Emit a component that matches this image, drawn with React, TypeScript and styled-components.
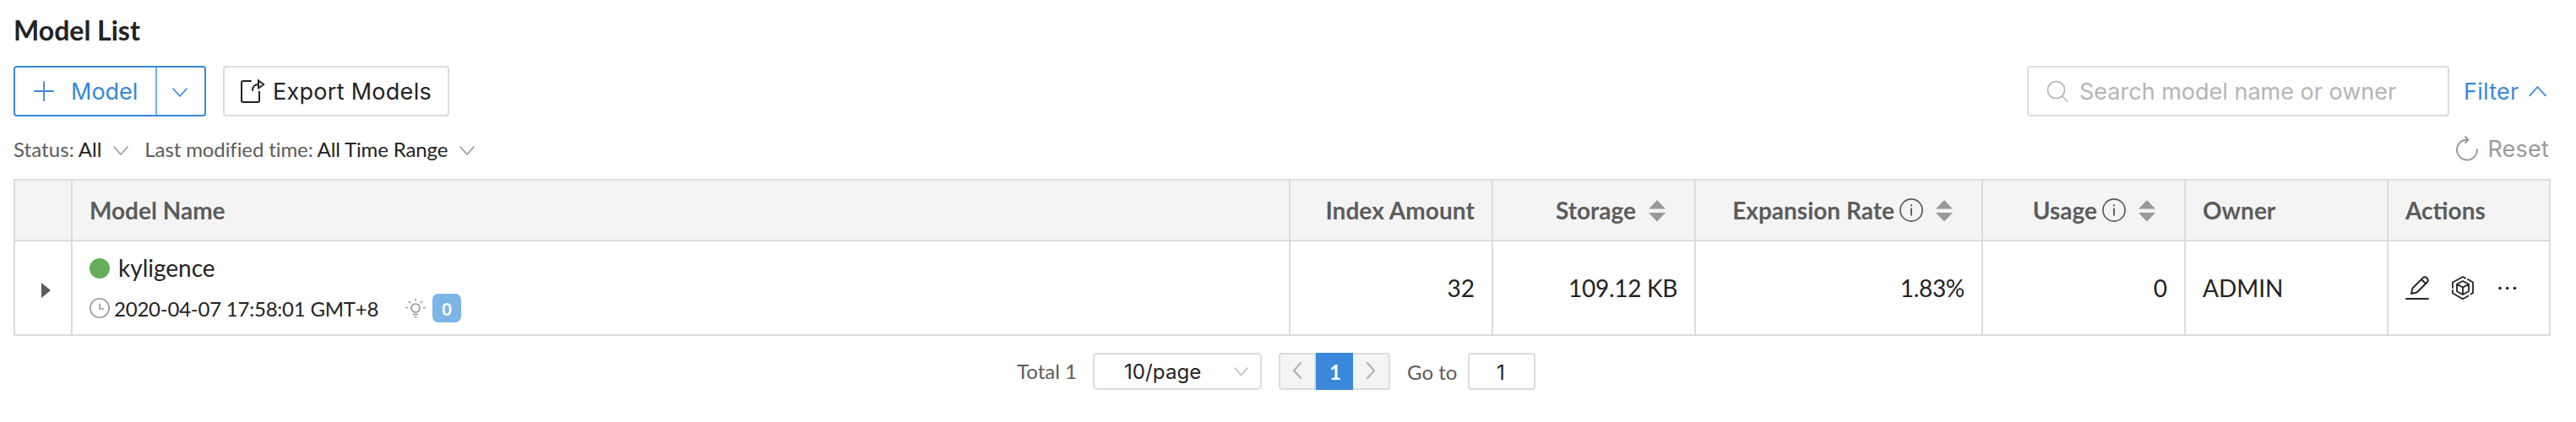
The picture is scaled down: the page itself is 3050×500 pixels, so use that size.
import React from "react";
import styled, { createGlobalStyle } from "styled-components";

const Global = createGlobalStyle`
  *{box-sizing:border-box}
  body{margin:0;background:#fff;color:#232323;font-family:Lato,"Liberation Sans",sans-serif}
  button,input{font:inherit;color:inherit;margin:0}
  svg{display:block;flex:none}
`;

const LINE = "#dcdcdc";
const BLUE = "#3988d9";
const UI = `Inter,"Liberation Sans",sans-serif`;

const Page = styled.main`width:3050px;height:500px;padding:16px 30px 0 16px;overflow:hidden;`;
const Title = styled.h1`margin:0;font-size:32px;line-height:40px;font-weight:700;height:62px;`;
const Toolbar = styled.div`display:flex;align-items:center;height:60px;`;
const Spacer = styled.div`flex:1;`;
const SplitButton = styled.div`
  display:flex;width:228px;height:60px;border:2px solid ${BLUE};border-radius:4px;color:${BLUE};
`;
const SplitMain = styled.button`
  display:flex;align-items:center;width:168px;padding:0 0 0 22px;gap:20px;border:0;border-right:2px solid #6fb0e6;
  background:none;font-family:${UI};font-size:27px;
`;
const SplitToggle = styled.button`flex:1;display:flex;align-items:center;justify-content:center;border:0;padding:3px 2px 0 0;background:none;`;
const ExportButton = styled.button`
  display:flex;align-items:center;width:268px;height:60px;margin-left:20px;padding:0 0 0 18px;gap:9px;
  border:2px solid ${LINE};border-radius:4px;background:#fff;font-family:${UI};font-size:27px;white-space:nowrap;
`;
const Label = styled.span<{ $ls?: number }>`white-space:nowrap;letter-spacing:${p => p.$ls ?? 0}px;`;
const Search = styled.div`
  display:flex;align-items:center;width:500px;height:60px;padding-left:21px;gap:13px;border:2px solid ${LINE};
  border-radius:4px;color:#b5b5b5;font-family:${UI};font-size:27px;
`;
const FilterLink = styled.a`
  display:flex;align-items:center;gap:12px;margin-left:17px;width:103px;color:${BLUE};font-family:${UI};font-size:27px;
`;
const Filters = styled.div`display:flex;align-items:center;height:74px;padding-top:3px;font-size:24px;color:#5c5c5c;white-space:nowrap;`;
const Value = styled.span<{ $ls?: number }>`color:#232323;margin-left:5px;letter-spacing:${p => p.$ls ?? 0}px;`;
const Drop = styled.span<{ $l: number; $r: number }>`margin:0 ${p => p.$r}px 0 ${p => p.$l}px;padding-top:3px;color:#999;`;
const Reset = styled.div`display:flex;align-items:center;gap:11px;margin:-1px 2px 0 0;color:#999;font-family:${UI};font-size:27px;`;

const Table = styled.div`width:3004px;border:2px solid ${LINE};border-right-width:0;`;
const Row = styled.div<{ $head?: boolean }>`
  display:grid;grid-template-columns:68px 1442px 240px 240px 340px 240px 240px 192px;
  height:${p => (p.$head ? 72 : 110)}px;
  background:${p => (p.$head ? "#f4f4f4" : "#fff")};
  border-bottom:${p => (p.$head ? `2px solid ${LINE}` : "0")};
  font-size:28px;font-weight:${p => (p.$head ? 700 : 400)};color:${p => (p.$head ? "#5c5c5c" : "#232323")};
`;
const Cell = styled.div<{ $right?: boolean; $ls?: number }>`
  display:flex;align-items:center;padding:0 20px;border-right:2px solid ${LINE};white-space:nowrap;
  justify-content:${p => (p.$right ? "flex-end" : "flex-start")};letter-spacing:${p => p.$ls ?? 0}px;
`;
const ExpandCell = styled(Cell)`padding:5px 0 0 31px;`;
const NameCell = styled(Cell)`flex-direction:column;align-items:flex-start;justify-content:flex-start;padding:12px 20px 0;`;
const NameLine = styled.div`display:flex;align-items:center;height:40px;gap:10px;`;
const Name = styled.span`padding-bottom:2px;`;
const MetaLine = styled.div`display:flex;align-items:center;height:34px;margin-top:10px;font-size:24px;`;
const Modified = styled.span`margin:0 32px 0 5px;letter-spacing:-0.23px;`;
const Dot = styled.i`width:24px;height:24px;border-radius:50%;background:#67ac5b;`;
const Badge = styled.span`
  display:flex;align-items:center;justify-content:center;width:34px;height:34px;margin-left:8px;border-radius:7px;
  background:#7cb5e6;color:#fff;font-size:20px;font-weight:700;padding-top:2px;
`;
const SortBox = styled.span`margin:0 14px 0 15px;`;
const InfoBox = styled.span`margin-left:6px;`;
const ActionsCell = styled(Cell)`gap:27px;`;

const Pager = styled.div`display:flex;align-items:center;height:44px;margin:20px 0 0 1188px;font-size:24px;color:#5c5c5c;`;
const Total = styled.span`width:71px;padding-bottom:2px;white-space:nowrap;`;
const SizeSelect = styled.div`
  display:flex;align-items:center;justify-content:space-between;width:200px;height:44px;margin-left:19px;padding:0 14px 0 35px;
  border:2px solid ${LINE};border-radius:5px;font-family:${UI};font-size:24px;color:#232323;
`;
const SelectArrow = styled.span`color:#b5b5b5;`;
const Pages = styled.div`display:flex;width:132px;height:44px;margin-left:20px;`;
const Arrow = styled.button<{ $end?: boolean }>`
  display:flex;align-items:center;justify-content:center;width:44px;padding:0 0 2px;border:2px solid ${LINE};background:#f4f4f4;color:#b0b0b0;
  border-${p => (p.$end ? "left" : "right")}-width:${p => (p.$end ? 0 : 2)}px;
  border-radius:${p => (p.$end ? "0 4px 4px 0" : "4px 0 0 4px")};
`;
const Current = styled.span`
  display:flex;align-items:center;justify-content:center;width:44px;background:${BLUE};color:#fff;font-weight:700;font-size:24px;padding:1px 0 0 2px;
`;
const GoTo = styled.span`margin:0 0 0 20px;width:72px;`;
const GoInput = styled.div`
  display:flex;align-items:center;justify-content:center;width:80px;height:44px;border:2px solid ${LINE};border-radius:4px;
  color:#232323;font-family:${UI};font-size:24px;padding:2px 2px 0 0;
`;

type ChevProps = { w?: number; up?: boolean; sw?: number };
const Chevron = ({ w = 18, up, sw = 1.6 }: ChevProps) => (
  <svg width={w} height={w / 2 + 2} viewBox={`0 0 ${w} ${w / 2 + 2}`} fill="none" stroke="currentColor" strokeWidth={sw} strokeLinecap="round" strokeLinejoin="round">
    <path d={up ? `M1 ${w / 2 + 1}L${w / 2} 1L${w - 1} ${w / 2 + 1}` : `M1 1L${w / 2} ${w / 2 + 1}L${w - 1} 1`} />
  </svg>
);
const PageArrow = ({ next }: { next?: boolean }) => (
  <svg width="12" height="20" viewBox="0 0 12 20" fill="none" stroke="currentColor" strokeWidth="2" strokeLinecap="round" strokeLinejoin="round">
    <path d={next ? "M2 1L10 10L2 19" : "M10 1L2 10L10 19"} />
  </svg>
);
const Sort = () => (
  <SortBox>
    <svg width="20" height="28" viewBox="0 0 20 28" fill="#999"><path d="M10 2L20 12.500H0zM0 17H20L10 27.500z" /></svg>
  </SortBox>
);
const Info = () => (
  <InfoBox>
    <svg width="28" height="30" viewBox="0 0 28 30" fill="none" stroke="#5c5c5c">
      <circle cx="14" cy="15" r="13.100" strokeWidth="1.7" />
      <path d="M14 12.500V21.500M14 8.200V10.200" strokeWidth="1.9" />
    </svg>
  </InfoBox>
);

export default function App() {
  return (
    <Page>
      <Global />
      <Title>Model List</Title>
      <Toolbar>
        <SplitButton>
          <SplitMain>
            <svg width="24" height="24" viewBox="0 0 24 24" stroke="currentColor" strokeWidth="1.8" strokeLinecap="round"><path d="M1 12H23M12 1V23" /></svg>
            <Label>Model</Label>
          </SplitMain>
          <SplitToggle><Chevron /></SplitToggle>
        </SplitButton>
        <ExportButton>
          <svg width="30" height="30" viewBox="0 0 30 30" fill="none" stroke="currentColor" strokeWidth="2" strokeLinecap="round" strokeLinejoin="round">
            <path d="M13 3H4Q2 3 2 5V26Q2 28 4 28H21Q23 28 23 26V15.500" />
            <path d="M15 14C15 10 17.500 7 22 7M22 2.500L28.300 7L22 11.500" />
            <path d="M22 2V6.500M22 8V11.500" />
          </svg>
          <Label $ls={0.28}>Export Models</Label>
        </ExportButton>
        <Spacer />
        <Search>
          <svg width="26" height="26" viewBox="0 0 26 26" fill="none" stroke="currentColor" strokeWidth="1.6" strokeLinecap="round"><circle cx="11.500" cy="11.500" r="10" /><path d="M18.500 19L24.500 25" /></svg>
          <Label>Search model name or owner</Label>
        </Search>
        <FilterLink><Label $ls={0.25}>Filter</Label><Chevron w={21} up sw={1.8} /></FilterLink>
      </Toolbar>
      <Filters>
        <Label $ls={0.08}>Status:</Label><Value>All</Value><Drop $l={14} $r={19}><Chevron /></Drop>
        <Label $ls={-0.1}>Last modified time:</Label><Value $ls={-0.13}>All Time Range</Value><Drop $l={14} $r={0}><Chevron /></Drop>
        <Spacer />
        <Reset>
          <svg width="26" height="30" viewBox="0 0 26 30" fill="none" stroke="currentColor" strokeWidth="1.9" strokeLinecap="round" strokeLinejoin="round">
            <path d="M25 16A12 12 0 1 1 14 4.500M11 1L14.500 4.500L11 8" />
          </svg>
          <Label $ls={0.2}>Reset</Label>
        </Reset>
      </Filters>
      <Table>
        <Row $head>
          <Cell />
          <Cell>Model Name</Cell>
          <Cell $right $ls={0.07}>Index Amount</Cell>
          <Cell $right>Storage<Sort /></Cell>
          <Cell $right>Expansion Rate<Info /><Sort /></Cell>
          <Cell $right>Usage<Info /><Sort /></Cell>
          <Cell>Owner</Cell>
          <Cell>Actions</Cell>
        </Row>
        <Row>
          <ExpandCell><svg width="11" height="18" viewBox="0 0 11 18" fill="#5c5c5c"><path d="M0 0L11 9L0 18z" /></svg></ExpandCell>
          <NameCell>
            <NameLine><Dot /><Name>kyligence</Name></NameLine>
            <MetaLine>
              <svg width="24" height="24" viewBox="0 0 24 24" fill="none" stroke="#999" strokeWidth="1.6"><circle cx="12" cy="12" r="11.200" /><path d="M12 6.500V13H17" /></svg>
              <Modified>2020-04-07 17:58:01 GMT+8</Modified>
              <svg width="24" height="24" viewBox="0 0 24 24" fill="none" stroke="#999" strokeWidth="1.7" strokeLinecap="round">
                <circle cx="12" cy="12" r="5" /><path d="M9.500 19.500H14.500M11 22.500H13M12 1.500V2.500M4.500 4.500L5.500 5.500M19.500 4.500L18.500 5.500M1 11.500H2.500M21.500 11.500H23" />
              </svg>
              <Badge>0</Badge>
            </MetaLine>
          </NameCell>
          <Cell $right>32</Cell>
          <Cell $right $ls={-0.3}>109.12 KB</Cell>
          <Cell $right $ls={-0.3}>1.83%</Cell>
          <Cell $right>0</Cell>
          <Cell>ADMIN</Cell>
          <ActionsCell>
            <svg width="28" height="28" viewBox="0 0 28 28" fill="none" stroke="#232323" strokeWidth="1.9" strokeLinecap="round" strokeLinejoin="round">
              <path d="M1 27H27M7 21L8.500 14.500L20.500 2.300Q23 0.200 25.500 2.500Q28 5 25.700 7.500L13.500 19.500ZM19 4L24 9" />
            </svg>
            <svg width="26" height="28" viewBox="0 0 26 28" fill="none" stroke="#232323" strokeWidth="1.8" strokeLinecap="round" strokeLinejoin="round">
              <path d="M1 14V7.500L13 1L16 2.600M19 4L25 7.500V20L22.500 21.500M19.500 23.500L13 27.200L1 20.500V17" />
              <path d="M13 6L20 9.800V18.200L13 22L6 18.200V9.800ZM6 9.800L13 13.500L20 9.800M13 13.500V22" />
            </svg>
            <svg width="26" height="28" viewBox="0 0 26 28" fill="#232323"><circle cx="4" cy="14.500" r="1.800" /><circle cx="12.700" cy="14.500" r="1.800" /><circle cx="21.500" cy="14.500" r="1.800" /></svg>
          </ActionsCell>
        </Row>
      </Table>
      <Pager>
        <Total>Total 1</Total>
        <SizeSelect><Label $ls={0.1}>10/page</Label><SelectArrow><Chevron w={17} sw={1.4} /></SelectArrow></SizeSelect>
        <Pages><Arrow><PageArrow /></Arrow><Current>1</Current><Arrow $end><PageArrow next /></Arrow></Pages>
        <GoTo>Go to</GoTo>
        <GoInput>1</GoInput>
      </Pager>
    </Page>
  );
}
